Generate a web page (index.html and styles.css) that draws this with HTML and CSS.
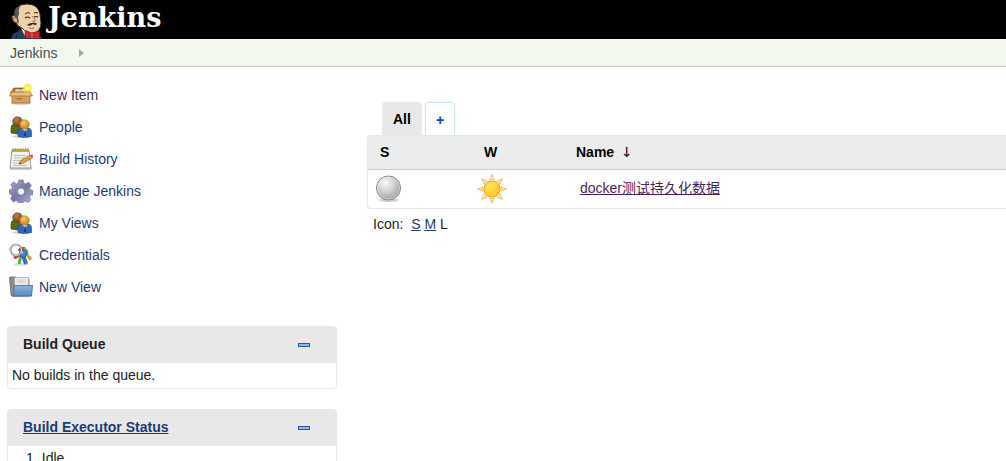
FILE: index.html
```html
<!DOCTYPE html>
<html lang="en">
<head>
  <meta charset="UTF-8" />
  <meta name="viewport" content="width=device-width, initial-scale=1" />
  <title>Dashboard [Jenkins]</title>
  <link rel="stylesheet" href="styles.css">
</head>
<body>
  <!-- shared gradients and the people icon -->
  <svg class="defs" width="0" height="0" aria-hidden="true">
    <defs>
      <radialGradient id="ball" cx="38%" cy="30%" r="70%">
        <stop offset="0" stop-color="#fafafa" />
        <stop offset="0.5" stop-color="#d2d2d2" />
        <stop offset="1" stop-color="#a2a2a2" />
      </radialGradient>
      <radialGradient id="sun" cx="40%" cy="35%" r="65%">
        <stop offset="0" stop-color="#ffe65c" />
        <stop offset="1" stop-color="#ffc41f" />
      </radialGradient>
      <radialGradient id="face" cx="40%" cy="30%" r="70%">
        <stop offset="0" stop-color="#f8c57c" />
        <stop offset="1" stop-color="#d27c18" />
      </radialGradient>
      <radialGradient id="face-dark" cx="40%" cy="30%" r="70%">
        <stop offset="0" stop-color="#b98642" />
        <stop offset="1" stop-color="#74430c" />
      </radialGradient>
      <linearGradient id="gear" x1="0" y1="0" x2="1" y2="1">
        <stop offset="0" stop-color="#a9abd0" />
        <stop offset="0.5" stop-color="#7778a8" />
        <stop offset="1" stop-color="#b4b6d6" />
      </linearGradient>
      <linearGradient id="folder" x1="0" y1="0" x2="0" y2="1">
        <stop offset="0" stop-color="#8fb4df" />
        <stop offset="1" stop-color="#5686c4" />
      </linearGradient>
      <radialGradient id="spark">
        <stop offset="0" stop-color="#fffbb0" />
        <stop offset="0.5" stop-color="#fcec2c" />
        <stop offset="1" stop-color="#fcea4a" stop-opacity="0.3" />
      </radialGradient>
      <symbol id="people" viewBox="0 0 24 24">
        <ellipse cx="13" cy="21.500" rx="10" ry="1.500" fill="#000" opacity="0.18" />
        <path d="M2 18V13q0-4 4-4h4q4 0 4 4v5q-6 2-12 0z" fill="#58691f" stroke="#3c4813" stroke-width="0.6" />
        <circle cx="8.500" cy="6.500" r="4.800" fill="url(#face-dark)" stroke="#64390a" stroke-width="0.5" />
        <path d="M9 21.500v-4.500q0-4 4-4h5q4.500 0 4.500 4v4.500q-7 2-13.500 0z" fill="#3469b0" stroke="#1f4784" stroke-width="0.6" />
        <path d="M14 14h4l-2 4z" fill="#fff" />
        <path d="M15.500 15h1l.5 6h-2z" fill="#173c75" />
        <circle cx="15.500" cy="9.500" r="4.800" fill="url(#face)" stroke="#b66a12" stroke-width="0.5" />
      </symbol>
    </defs>
  </svg>

  <header class="header">
    <a class="logo" href="#">
      <svg width="34" height="36" viewBox="0 0 34 36" aria-hidden="true">
        <path d="M1 36q1-5 4-6l6-3 14 3q6 1 7 6z" fill="#25405c" />
        <path d="M6 36l1-4M29 36l-1-4" stroke="#12263a" fill="none" />
        <path d="M11 25l5 10h10l1-8z" fill="#fff" />
        <path d="M5 13Q5 1 17 1q11 0 13 10l1 9q0 8-7 10-7 1-12-5-5-1-6-6-4-1-4-4 0-4 3-2z" fill="#efd0ab" stroke="#342d28" />
        <path d="M5 14Q2 6 9 3l3-2Q8 5 9 11l-1 3 1 6-2-1-1-5z" fill="#595550" />
        <path d="M6 15q-3-2-3 1 0 4 5 4" fill="#dcae82" stroke="#4b3c30" stroke-width="0.8" />
        <path d="M15 11q2-2 5-1M24 10q2-1 4 0" stroke="#2b2521" stroke-width="1" fill="none" />
        <path d="M15 15q2-2 5 0M24 14q2-1 4 0" stroke="#211b18" stroke-width="1.200" fill="none" />
        <path d="M22 13q4 3 3 5-1 1-3 0" stroke="#98694a" stroke-width="0.9" fill="none" />
        <path d="M17 22q2-2 5-2 4-1 5 1-2 2-4 0-3 3-6 1z" fill="#302924" />
        <path d="M19 25q3 1 5 0" stroke="#a9664b" fill="none" />
        <path d="M15 28q2-1 7 3 5-4 8-2l-1 7q-3 0-7-2-4 2-7 1z" fill="#d9212c" stroke="#7d1119" stroke-width="0.6" />
        <rect x="20" y="30" width="4" height="4" rx="1" fill="#f0474c" stroke="#7d1119" stroke-width="0.6" />
      </svg>
      <span class="logo-text">Jenkins</span>
    </a>
  </header>

  <nav class="breadcrumbs">
    <a href="#">Jenkins</a>
    <svg width="5" height="8" viewBox="0 0 5 8" aria-hidden="true"><path d="M0 0l5 4-5 4z" fill="#a3a8a0" /></svg>
  </nav>

  <div class="page">
    <aside class="side-panel">
      <nav class="tasks">
        <a class="task visited" href="#">
          <svg width="24" height="24" viewBox="0 0 24 24" aria-hidden="true">
            <ellipse cx="12" cy="20.500" rx="10" ry="1.500" fill="#000" opacity="0.2" />
            <path d="M5 5h14l2 6H3z" fill="#9b6c31" stroke="#8c5c22" stroke-width="0.7" />
            <path d="M6 7q2-2 5 0 3-2 6 0v2H6z" fill="#e4dccb" />
            <path d="M4.500 5L1 10h3z" fill="#e5b56e" stroke="#9c6a2c" stroke-width="0.6" />
            <path d="M3 9h18v11H3z" fill="#d5a15a" stroke="#91612a" stroke-width="0.7" />
            <path d="M3 9h18l2.500 4H.5z" fill="#e9be7e" stroke="#a2702f" stroke-width="0.7" />
            <path d="M7.500 15h6v1.500h-6z" fill="#a5763a" />
            <circle cx="18.500" cy="5" r="5" fill="url(#spark)" />
          </svg>
          New Item
        </a>
        <a class="task" href="#">
          <svg width="24" height="24" aria-hidden="true"><use href="#people" /></svg>
          People
        </a>
        <a class="task" href="#">
          <svg width="24" height="24" viewBox="0 0 24 24" aria-hidden="true">
            <path d="M1 21h22v2H1z" fill="#000" opacity="0.18" />
            <path d="M3 3h17l2 18H1z" fill="#f3f3ef" stroke="#8b8b85" stroke-width="0.9" />
            <path d="M3 2h17v3H3z" fill="#c7ae3b" />
            <path d="M4 1v3M6.500 1v3M9 1v3M11.500 1v3M14 1v3M16.500 1v3M19 1v3" stroke="#a18a31" stroke-width="0.7" />
            <path d="M5 8.500h12M5 11h11M4 13.500h9M4 16h6M4 18.500h14" stroke="#b5b5b2" stroke-width="0.9" />
            <path d="M10 17l2-3.500L21.500 8l2 2.500-10 6z" fill="#e7a043" stroke="#965316" stroke-width="0.7" />
            <path d="M21.500 8l2-.5.500 2-1 1z" fill="#d94531" />
            <path d="M10 17l1-1.800 1 1.300z" fill="#333" />
          </svg>
          Build History
        </a>
        <a class="task" href="#">
          <svg width="24" height="24" viewBox="0 0 24 24" aria-hidden="true">
            <ellipse cx="12" cy="22.500" rx="9" ry="1.500" fill="#000" opacity="0.13" />
            <g stroke="#66688f" stroke-width="0.6">
              <path d="M9.800 1h4.400l.7 3.300 1.700.7 2.900-1.800 2.900 3.100-1.800 2.700.6 1.700 2.800.8v4l-3 .7-.8 1.700 1.700 2.800-3 2.700-2.900-1.700-1.800.7-.7 2.100H9.700L9 22l-1.800-.8-2.900 1.600-2.700-3 1.600-2.600-.7-1.700-2.100-.7v-3.900l2.300-.8.8-1.700-1.700-2.800 2.900-2.800L7.400 5 9 4.300zM12 9a3.500 3.500 0 1 0 0 7 3.500 3.500 0 0 0 0-7z" fill="url(#gear)" fill-rule="evenodd" />
            </g>
          </svg>
          Manage Jenkins
        </a>
        <a class="task" href="#">
          <svg width="24" height="24" aria-hidden="true"><use href="#people" /></svg>
          My Views
        </a>
        <a class="task" href="#">
          <svg width="24" height="24" viewBox="0 0 24 24" aria-hidden="true">
            <ellipse cx="12" cy="21.500" rx="8" ry="1.500" fill="#000" opacity="0.13" />
            <path d="M11 12l-6 3" stroke="#d42a3d" stroke-width="3" />
            <path d="M12 12l-2 9" stroke="#4cba32" stroke-width="3" />
            <path d="M16 10l6 6" stroke="#d6aa29" stroke-width="3" />
            <path d="M19 15l2-1M20 17l2-1" stroke="#a67d13" />
            <path d="M14 12l3 9" stroke="#356eb7" stroke-width="4" />
            <path d="M10 8q2-4 6-2" stroke="#e23a36" stroke-width="3" fill="none" />
            <path d="M15 6q4 1 3 6" stroke="#6fb043" stroke-width="2.500" fill="none" />
            <circle cx="14" cy="10.500" r="3.800" fill="#4c83c8" stroke="#285694" stroke-width="0.8" />
            <circle cx="13" cy="9.500" r="1" fill="#fff" />
            <circle cx="7" cy="7" r="5.500" fill="none" stroke="#858585" stroke-width="2" />
            <circle cx="7" cy="7" r="5.500" fill="none" stroke="#e8e8e8" stroke-width="0.8" />
          </svg>
          Credentials
        </a>
        <a class="task" href="#">
          <svg width="24" height="24" viewBox="0 0 24 24" aria-hidden="true">
            <path d="M3 21h20v1H3z" fill="#000" opacity="0.15" />
            <path d="M.5 3q0-1 1-1H7l1 2h12v17H3q-1 0-1-2z" fill="#8c8e8c" stroke="#666866" stroke-width="0.8" />
            <path d="M5.500 2.500h14v9h-14z" fill="#ececec" stroke="#a1a1a1" stroke-width="0.7" />
            <path d="M8 5h9M8 7h9" stroke="#c3c3c3" stroke-width="0.8" />
            <path d="M5 10.500h18.500L22.500 21H3q1.500-1 2-4z" fill="url(#folder)" stroke="#3769a8" stroke-width="0.8" />
          </svg>
          New View
        </a>
      </nav>

      <section class="pane">
        <div class="pane-header">
          <h2>Build Queue</h2>
          <button class="collapse" type="button" aria-label="Collapse build queue"></button>
        </div>
        <p class="pane-text">No builds in the queue.</p>
      </section>

      <section class="pane">
        <div class="pane-header">
          <h2><a href="#">Build Executor Status</a></h2>
          <button class="collapse" type="button" aria-label="Collapse build executor status"></button>
        </div>
        <table class="executors">
          <tr><td>1</td><td>Idle</td></tr>
        </table>
      </section>
    </aside>

    <main class="main-panel">
      <div class="tabs">
        <a class="tab active" href="#">All</a>
        <a class="tab new-tab" href="#" title="New View">+</a>
      </div>
      <table class="jobs">
        <thead>
          <tr>
            <th class="col-status">S</th>
            <th class="col-weather">W</th>
            <th>Name <span class="sort">↓</span></th>
          </tr>
        </thead>
        <tbody>
          <tr>
            <td>
              <svg width="26" height="28" viewBox="0 0 26 28" role="img" aria-label="Not built">
                <ellipse cx="13" cy="25" rx="10" ry="2" fill="#000" opacity="0.18" />
                <circle cx="12.500" cy="13" r="12" fill="url(#ball)" stroke="#858585" />
                <circle cx="12.500" cy="13" r="11" fill="none" stroke="#fff" stroke-width="0.7" opacity="0.6" />
              </svg>
            </td>
            <td>
              <svg width="30" height="30" viewBox="-15 -15 30 30" role="img" aria-label="100%">
                <g fill="#ffe7a0" stroke="#eeb75c" stroke-width="0.8">
                  <path id="ray" d="M-2.200-9L0-14.500 2.200-9z" />
                  <use href="#ray" transform="rotate(45)" />
                  <use href="#ray" transform="rotate(90)" />
                  <use href="#ray" transform="rotate(135)" />
                  <use href="#ray" transform="rotate(180)" />
                  <use href="#ray" transform="rotate(225)" />
                  <use href="#ray" transform="rotate(270)" />
                  <use href="#ray" transform="rotate(315)" />
                </g>
                <circle r="8" fill="url(#sun)" stroke="#f0a13c" />
              </svg>
            </td>
            <td class="job-name"><a href="#">docker测试持久化数据</a></td>
          </tr>
        </tbody>
      </table>
      <div class="icon-size">
        <span class="icon-label">Icon:</span>
        <a href="#">S</a> <a href="#">M</a> L
      </div>
    </main>
  </div>
</body>
</html>
```

FILE: styles.css
```css
* {
  box-sizing: border-box;
}

body {
  height: 100vh;
  margin: 0;
  overflow: hidden;
  background: #fff;
  color: #222;
  font-family: "Liberation Sans", "Noto Sans CJK SC", sans-serif;
  font-size: 14px;
  line-height: 18px;
}

a {
  color: #1c3b78;
}

svg {
  display: block;
}

.defs {
  position: absolute;
}

/* header */
.header {
  display: flex;
  height: 39px;
  padding-left: 10px;
  background: #000;
}

.logo {
  display: flex;
  align-items: flex-end;
  gap: 4px;
  color: #fff;
  text-decoration: none;
}

.logo-text {
  align-self: flex-start;
  font-family: "DejaVu Serif", serif;
  font-size: 27px;
  font-weight: bold;
  line-height: 36px;
}

.breadcrumbs {
  display: flex;
  align-items: center;
  gap: 22px;
  height: 28px;
  padding-left: 10px;
  background: #f3f9ef;
  border-bottom: 1px solid #c5cac2;
}

.breadcrumbs a {
  color: #4d4d4d;
  text-decoration: none;
}

.page {
  display: flex;
  gap: 30px;
  padding-left: 7px;
}

/* side panel */
.side-panel {
  flex: 0 0 330px;
  padding-top: 12px;
}

.tasks {
  margin-bottom: 23px;
}

.task {
  display: flex;
  align-items: center;
  gap: 6px;
  height: 32px;
  padding-left: 2px;
  text-decoration: none;
}

.task.visited {
  color: #4a1f5c;
}

.pane {
  margin-bottom: 20px;
  border: 1px solid #e8e8e8;
  border-radius: 4px;
}

.pane-header {
  display: flex;
  align-items: center;
  justify-content: space-between;
  height: 36px;
  padding: 0 26px 2px 15px;
  background: #e8e8e8;
}

.pane-header h2 {
  margin: 0;
  font-size: 14px;
}

.collapse {
  width: 12px;
  height: 4px;
  margin-top: 2px;
  padding: 0;
  background: #8fb8e8;
  border: 1px solid #2458a8;
  cursor: pointer;
}

.pane-text {
  margin: 0;
  padding: 3px 4px 4px;
}

.executors {
  margin: 3px 0 4px 18px;
  border-spacing: 0;
}

.executors td {
  padding: 0 8px 0 0;
}

/* job list */
.main-panel {
  flex: 1;
  padding-top: 35px;
}

.tabs {
  display: flex;
  gap: 3px;
  padding-left: 15px;
}

.tab {
  min-width: 30px;
  height: 33px;
  padding: 0 11px;
  border-radius: 4px 4px 0 0;
  font-weight: bold;
  line-height: 34px;
  text-decoration: none;
}

.tab.active {
  background: #e8e8e8;
  color: #000;
}

.new-tab {
  padding: 0 10px;
  border: 1px solid #c5e6fa;
  border-bottom: none;
  color: #0645c8;
}

.jobs {
  width: 100%;
  border: 1px solid #e8e8e8;
  border-right: none;
  border-radius: 4px 0 0 4px;
  border-spacing: 0;
}

.jobs th {
  height: 34px;
  padding: 0 12px 2px;
  background: #ececec;
  border-bottom: 1px solid #ccc;
  color: #000;
  text-align: left;
}

.jobs .col-status {
  width: 104px;
}

.jobs .col-weather {
  width: 92px;
}

.sort {
  margin-left: 3px;
  font-family: "DejaVu Sans", sans-serif;
  font-weight: normal;
}

.jobs td {
  height: 38px;
  padding: 0 8px;
}

.jobs td:nth-child(2) {
  padding-left: 5px;
}

.jobs .job-name {
  padding: 0 8px 2px 16px;
}

.job-name a {
  color: #4a1f5c;
}

.icon-size {
  padding: 6px;
}

.icon-label {
  margin-right: 4px;
}
```
